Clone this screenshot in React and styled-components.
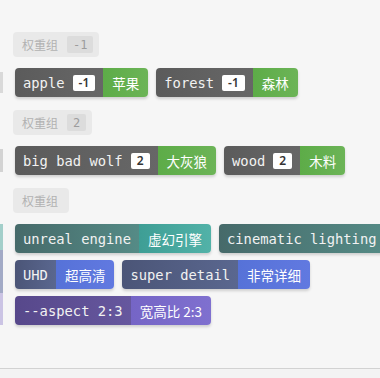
import React from "react";
import styled, { createGlobalStyle } from "styled-components";

const Global = createGlobalStyle`
  html, body { margin: 0; padding: 0; background: #f3f3f3; overflow: hidden; }
  body { font-family: "Noto Sans CJK SC", "Noto Sans", sans-serif; }
`;

const themes = {
  grey: {
    dark: "linear-gradient(90deg, #5b5b5b, #676767)",
    light: "linear-gradient(90deg, #5dac48, #6cb457)",
  },
  teal: {
    dark: "linear-gradient(90deg, #466a6a, #558b86)",
    light: "linear-gradient(90deg, #3e9e95, #52b2a8)",
  },
  blue: {
    dark: "linear-gradient(90deg, #4b5577, #5a678f)",
    light: "linear-gradient(90deg, #5672d8, #6179e0)",
  },
  purple: {
    dark: "linear-gradient(90deg, #57488b, #66579e)",
    light: "linear-gradient(90deg, #7565c6, #7f70cf)",
  },
};

const Page = styled.div`
  height: 369px;
  box-sizing: border-box;
  border-bottom: 1px solid #d2d2d2;
  background: #f6f6f6;
  padding-top: 32px;
  display: flex;
  flex-direction: column;
  gap: 13px;
  overflow: hidden;
`;

const Group = styled.section`
  display: flex;
  flex-direction: column;
  gap: 11px;
`;

const Header = styled.div`
  align-self: flex-start;
  margin-left: 13px;
  height: 25px;
  box-sizing: border-box;
  display: flex;
  align-items: center;
  gap: 9px;
  padding: 0 ${(p) => (p.$bare ? 11 : 6)}px 0 9px;
  background: #e9e9e9;
  border-radius: 4px;
`;

const HeaderLabel = styled.span`
  font-size: 12px;
  color: #b2b2b2;
  line-height: 1;
`;

const HeaderValue = styled.span`
  height: 17px;
  display: flex;
  align-items: center;
  padding: 0 6px;
  background: #dcdcdc;
  border-radius: 2px;
  font-family: "DejaVu Sans Mono", monospace;
  font-size: 12px;
  color: #9c9c9c;
`;

const Area = styled.div`
  display: flex;
  gap: 12px;
`;

const Strip = styled.div`
  width: 3px;
  flex: none;
  background: ${(p) => p.$bg};
  margin: ${(p) => p.$inset} 0;
`;

const Tags = styled.div`
  width: 460px;
  flex: none;
  display: flex;
  flex-wrap: wrap;
  gap: 7px 8px;
`;

const Tag = styled.div`
  display: flex;
  height: 29px;
  border-radius: 4px;
  overflow: hidden;
  box-shadow: 0 2px 3px rgba(0, 0, 0, 0.16);
  flex: none;
`;

const En = styled.div`
  display: flex;
  align-items: center;
  gap: 8px;
  padding: 0 8px;
  background: ${(p) => themes[p.$theme].dark};
  color: #f2f2f2;
  font-family: "DejaVu Sans Mono", monospace;
  font-size: 13.8px;
  white-space: pre;
`;

const Weight = styled.span`
  height: 16px;
  padding: 0 6px;
  display: flex;
  align-items: center;
  justify-content: center;
  background: #fff;
  border-radius: 2px;
  color: #333;
  font-family: "Noto Sans", sans-serif;
  font-weight: 600;
  font-size: 12px;
`;

const Zh = styled.div`
  display: flex;
  align-items: center;
  padding: 0 9px;
  background: ${(p) => themes[p.$theme].light};
  color: #fff;
  font-family: "Noto Sans CJK SC", sans-serif;
  font-size: 13.5px;
  white-space: pre;
`;

const groups = [
  {
    label: "权重组",
    value: "-1",
    strip: "#d9d9d9",
    inset: "4px",
    tags: [
      { en: "apple", w: "-1", zh: "苹果", t: "grey" },
      { en: "forest", w: "-1", zh: "森林", t: "grey" },
    ],
  },
  {
    label: "权重组",
    value: "2",
    strip: "#d3d3d3",
    inset: "3px",
    tags: [
      { en: "big bad wolf", w: "2", zh: "大灰狼", t: "grey" },
      { en: "wood", w: "2", zh: "木料", t: "grey" },
    ],
  },
  {
    label: "权重组",
    strip:
      "linear-gradient(180deg, #a3cfca 0 26%, #a2aac6 26% 68%, #cbc4e4 68% 100%)",
    inset: "0px",
    tags: [
      { en: "unreal engine", zh: "虚幻引擎", t: "teal" },
      { en: "cinematic lighting", zh: "电影灯光", t: "teal" },
      { en: "UHD", zh: "超高清", t: "blue" },
      { en: "super detail", zh: "非常详细", t: "blue" },
      { en: "--aspect 2:3", zh: "宽高比 2:3", t: "purple" },
    ],
  },
];

export default function App() {
  return (
    <>
      <Global />
      <Page>
        {groups.map((g, i) => (
          <Group key={i}>
            <Header $bare={!g.value}>
              <HeaderLabel>{g.label}</HeaderLabel>
              {g.value && <HeaderValue>{g.value}</HeaderValue>}
            </Header>
            <Area>
              <Strip $bg={g.strip} $inset={g.inset} />
              <Tags>
                {g.tags.map((t) => (
                  <Tag key={t.en}>
                    <En $theme={t.t}>
                      {t.en}
                      {t.w && <Weight>{t.w}</Weight>}
                    </En>
                    <Zh $theme={t.t}>{t.zh}</Zh>
                  </Tag>
                ))}
              </Tags>
            </Area>
          </Group>
        ))}
      </Page>
    </>
  );
}
